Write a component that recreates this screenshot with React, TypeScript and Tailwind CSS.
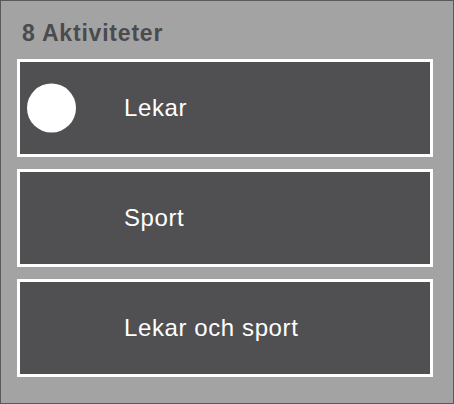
const activities = [
  { name: 'Lekar', selected: true },
  { name: 'Sport', selected: false },
  { name: 'Lekar och sport', selected: false },
];

export default function App() {
  return (
    <div
      className="w-[454px] h-[404px] border border-[#5a5a5a] bg-[#a3a3a3] pl-4 pt-[18px]"
      style={{ fontFamily: '"Liberation Sans", Arial, sans-serif' }}
    >
      <h2 className="text-[23px] leading-[29px] font-bold tracking-[0.8px] text-[#4b4b4f] pl-[5px] mb-[11px]">
        {activities.length + 5} Aktiviteter
      </h2>
      <div className="flex flex-col gap-3">
        {activities.map((a) => (
          <div
            key={a.name}
            className="relative w-[416px] h-[98px] border-[3px] border-white bg-[#505052] flex items-center pl-[104px]"
          >
            {a.selected && (
              <div className="absolute left-[7px] top-1/2 -translate-y-1/2 size-[49px] rounded-full bg-white" />
            )}
            <span className="text-[24px] leading-none tracking-[0.6px] text-white">{a.name}</span>
          </div>
        ))}
      </div>
    </div>
  );
}
